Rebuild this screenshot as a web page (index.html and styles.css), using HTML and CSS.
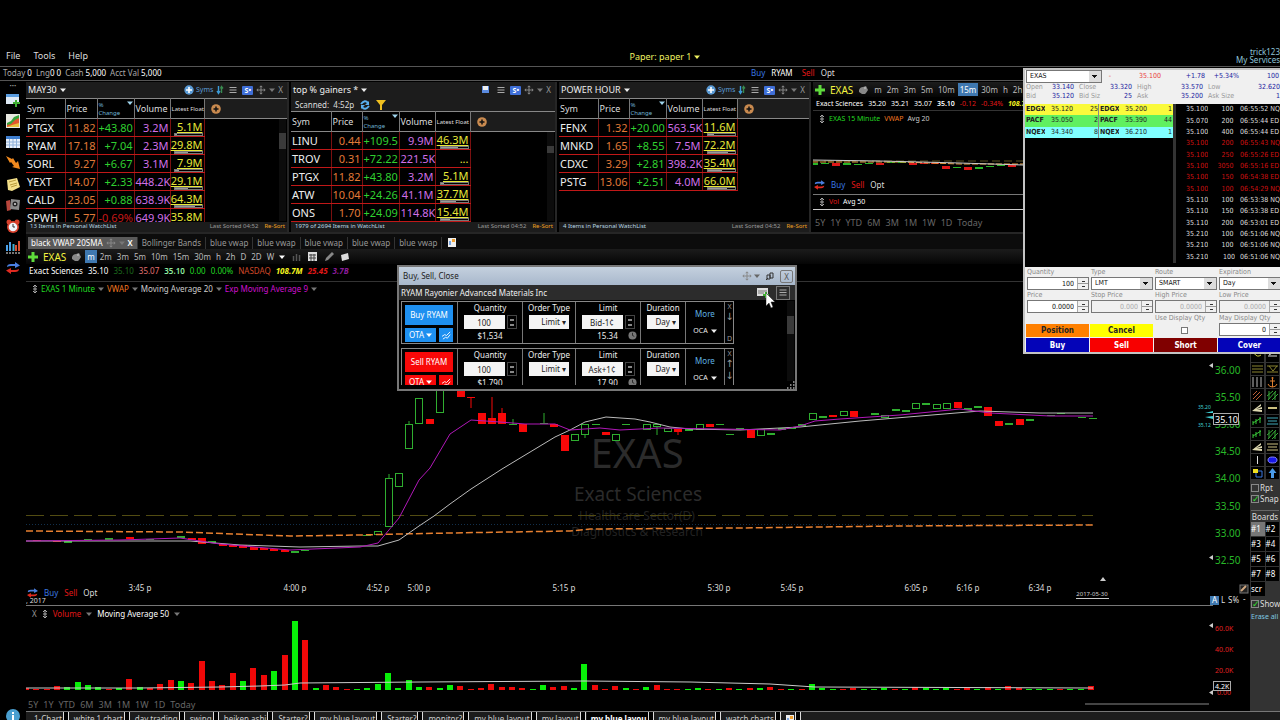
FILE: index.html
```html
<!DOCTYPE html>
<html lang="en">
<head>
<meta charset="utf-8">
<title>Trading workspace</title>
<link rel="stylesheet" href="styles.css">
</head>
<body>
<svg class="defs" aria-hidden="true">
  <symbol id="i-plus" viewBox="0 0 10 10"><path d="M3.500 0h3v3.500H10v3H6.500V10h-3V6.500H0v-3h3.500z" fill="#5fdc3c"/></symbol>
  <symbol id="i-add" viewBox="0 0 10 10"><circle cx="5" cy="5" r="4.700" fill="#5b9bd5"/><path d="M5 2v6M2 5h6" stroke="#fff" stroke-width="1.600"/></symbol>
  <symbol id="i-addcol" viewBox="0 0 10 10"><circle cx="5" cy="5" r="4.800" fill="#c98a4f"/><path d="M5 2.500v5M2.500 5h5" stroke="#111" stroke-width="1.500"/></symbol>
  <symbol id="i-sort" viewBox="0 0 8 10"><path d="M2.500 1v7M1 6l1.500 2.500L4 6" stroke="#3c9bd8" fill="none" stroke-width="1.400"/><path d="M5.500 8V2M4.500 3.500L5.500 1.500 7 3.500" stroke="#3a8c50" fill="none" stroke-width="1.400"/></symbol>
  <symbol id="i-menu" viewBox="0 0 8 8"><path d="M0.500 1.500h7M0.500 4h7M0.500 6.500h7" stroke="#aaa"/></symbol>
  <symbol id="i-move" viewBox="0 0 10 10"><path d="M5 1v8M1 5h8M3.700 2.200L5 .8l1.300 1.400M3.700 7.800L5 9.200l1.300-1.400M2.200 3.700L.8 5l1.400 1.300M7.800 3.700L9.200 5 7.800 6.300" stroke="#888" fill="none"/></symbol>
  <symbol id="i-down" viewBox="0 0 6 4"><path d="M0 .5h6L3 4z" fill="currentColor"/></symbol>
  <symbol id="i-swap" viewBox="0 0 14 12"><path d="M1 5q0-3 4-3h4V0l5 3.500L9 6V4H5Q3 4 1 5z" fill="#4a7fe0"/><path d="M13 7q0 3-4 3H5v2L0 8.500 5 6v2h4q2 0 4-1z" fill="#e02a20"/></symbol>
  <symbol id="i-pig" viewBox="0 0 10 10"><path d="M1 5q1-3 4-3l3-1 1 2 1 2-2 3-1 1H4L1 7z" fill="#888"/><path d="M6 3h2" stroke="#ccc"/></symbol>
  <symbol id="i-updown" viewBox="0 0 6 10"><path d="M3 1v8M1 3l2-2 2 2M1 7l2 2 2-2M1 5h4" stroke="#aaa" fill="none"/></symbol>
  <symbol id="i-clock" viewBox="0 0 10 10"><circle cx="5" cy="5" r="4.500" fill="#777"/><path d="M5 2v3l2 1" stroke="#222" fill="none"/></symbol>
  <symbol id="i-zig" viewBox="0 0 10 10"><path d="M0 6l3-2 2 1 4-4M1 9l3-2 2 1 3-4" stroke="#fff" fill="none"/></symbol>
  <symbol id="i-page" viewBox="0 0 8 10"><path d="M0 1h8v9H0z" fill="#eee"/><path d="M4 2h3v3H4z" fill="#f0a030"/><path d="M1 4h2v4H1z" fill="#7aa5e0"/></symbol>
</svg>

<div class="app">
  <header class="menubar">
    <nav class="menus"><button>File</button><button>Tools</button><button>Help</button></nav>
    <button class="account">Paper: paper 1 <svg class="caret"><use href="#i-down"/></svg></button>
    <div class="user"><a href="#">trick123</a><a href="#">My Services</a></div>
  </header>
  <div class="balances">
    <p class="bal"><span>Today <b>0</b></span><span>Lng<b>0</b> <b>0</b></span><span>Cash <b>5,000</b></span><span>Acct Val <b>5,000</b></span></p>
    <p class="quick"><a class="blue" href="#">Buy</a><b>RYAM</b><a class="red" href="#">Sell</a><a href="#">Opt</a></p>
  </div>

  <div class="body">
    <aside class="rail">
      <span class="dots">•••</span>
      <svg viewBox="0 0 14 14"><path d="M0 1h13v10H0z" fill="#dfeaf5"/><path d="M0 1h13v3H0z" fill="#5a9de0"/><path d="M9 7h2v2h3v2h-3v3H9v-3H7V9h2z" fill="#3fae32"/></svg>
      <svg viewBox="0 0 14 14"><path d="M0 0h14v14H0z" fill="#e8e8e0"/><path d="M1 13V9l4-2 3-4 5-2v12z" fill="#37a23a"/><path d="M1 13v-2l4-1 4-4 4-2v9z" fill="#e2552d"/><path d="M1 13l5-2 7-2v4z" fill="#e9c23b"/></svg>
      <svg viewBox="0 0 14 14"><path d="M0 1h14v12H0z" fill="#e8f0fa"/><path d="M0 1h14v3H0z" fill="#3f7fd0"/><path d="M0 7h14M0 10h14M3.500 4v9M7 4v9M10.500 4v9" stroke="#8fb0d8"/></svg>
      <svg viewBox="0 0 14 14"><path d="M0 0l6 3 1-1 3 5 2-2 2 8-8-2 2-1-3-4-1 1z" fill="#f28a1f"/></svg>
      <svg viewBox="0 0 14 14"><path d="M1 3l10-2 3 9-8 4-4-1z" fill="#f4e08a"/><path d="M3 5l7-2M4 8l7-2M5 10l6-2" stroke="#b89a3a"/></svg>
      <svg viewBox="0 0 14 14"><path d="M0 3l4-1 1 10-4 1z" fill="#b8463c"/><path d="M5 1l9 1-1 10-9-1z" fill="#8a8a8a"/><circle cx="9" cy="6" r="2.500" fill="#222"/><circle cx="9" cy="6" r="1" fill="#ddd"/></svg>
      <svg viewBox="0 0 14 14"><circle cx="3" cy="3" r="2.500" fill="#d8402c"/><circle cx="11" cy="3" r="2.500" fill="#d8402c"/><circle cx="7" cy="8" r="6" fill="#d8402c"/><circle cx="7" cy="8" r="4.300" fill="#eef4fa"/><path d="M7 5v3h2" stroke="#333" fill="none"/></svg>
      <svg viewBox="0 0 14 14"><path d="M1 5v6M4 2v9" stroke="#4aa0e8" stroke-width="2"/><path d="M7.500 4v7" stroke="#3fb0d0" stroke-width="2"/><path d="M10 5v6M13 1v10" stroke="#d85030" stroke-width="2"/><path d="M0 13h14" stroke="#eee" stroke-dasharray="2 1"/></svg>
      <svg viewBox="0 0 14 12"><use href="#i-swap"/></svg>
      <svg class="info" viewBox="0 0 14 14"><circle cx="7" cy="7" r="7" fill="#4a9fd0"/><path d="M7 6v5M7 3v2" stroke="#fff" stroke-width="2"/></svg>
    </aside>

    <main class="desk">
      <section class="lists">
        <div class="list" data-list="may30"></div>
        <div class="list" data-list="gainers"></div>
        <div class="list" data-list="power"></div>
        <div class="mini">
          <div class="toolbar">
            <svg class="ic10"><use href="#i-plus"/></svg><b class="sym">EXAS</b><svg class="ic10"><use href="#i-pig"/></svg>
            <button>m</button><button>2m</button><button>3m</button><button>5m</button><button>10m</button><button class="on">15m</button><button>30m</button><button>h</button><button>2h</button>
          </div>
          <p class="quote small"><span>Exact Sciences</span><span>35.20</span><span>35.21</span><span>35.07</span><b>35.10</b><span class="red">-0.12</span><span class="red">-0.34%</span><b class="yellow it">108.7M</b></p>
          <p class="legend small"><svg class="ud"><use href="#i-updown"/></svg><span class="green">EXAS 15 Minute</span><span class="orange">VWAP</span><span>Avg 20</span></p>
          <svg class="minichart" viewBox="813 126 211 51" preserveAspectRatio="xMinYMin meet" id="mini"></svg>
          <p class="trade"><svg class="swap"><use href="#i-swap"/></svg><a class="blue" href="#">Buy</a><a class="red" href="#">Sell</a><a href="#">Opt</a></p>
          <p class="legend small vol"><svg class="ud"><use href="#i-updown"/></svg><span class="red">Vol</span><span>Avg 50</span></p>
          <p class="range"><button>5Y</button><button>1Y</button><button>YTD</button><button>6M</button><button>3M</button><button>1M</button><button>1W</button><button>1D</button><button>Today</button></p>
        </div>
      </section>

      <nav class="tabs">
        <button class="tab on">black VWAP 20SMA <svg class="ic10"><use href="#i-move"/></svg><svg class="caret dim"><use href="#i-down"/></svg><b>X</b></button>
        <button class="tab">Bollinger Bands</button><button class="tab">blue vwap</button><button class="tab">blue vwap</button><button class="tab">blue vwap</button><button class="tab">blue vwap</button><button class="tab">blue vwap</button>
        <svg class="page"><use href="#i-page"/></svg>
      </nav>

      <div class="work">
        <section class="chartcol">
          <div class="toolbar">
            <svg class="ic10"><use href="#i-plus"/></svg><b class="sym">EXAS</b><svg class="ic10"><use href="#i-pig"/></svg>
            <button class="on">m</button><button>2m</button><button>3m</button><button>5m</button><button>10m</button><button>15m</button><button>30m</button><button>h</button><button>2h</button><button>D</button><button>2D</button><button>W</button>
            <svg class="caret white"><use href="#i-down"/></svg>
            <svg class="ic10" viewBox="0 0 10 10"><path d="M1.500 4v5M4.500 2v7M7.500 3v6" stroke="#555" stroke-width="1.500"/></svg>
            <svg class="ic10" viewBox="0 0 10 10"><path d="M0 0h9v9H0z" fill="#ddd"/><path d="M1 3h7M1 6h7M3 2v7M6 2v7" stroke="#444"/></svg>
            <svg class="ic10" viewBox="0 0 10 10"><path d="M1 9l1-3 6-6 2 2-6 6z" fill="#888"/></svg>
            <svg class="ic10" viewBox="0 0 10 10"><path d="M1 3l7-2 1 6-7 2z" fill="#ddd"/></svg>
          </div>
          <p class="quote"><span>Exact Sciences</span><span>35.10</span><span class="dkgreen">35.10</span><span class="salmon">35.07</span><b class="ltgreen">35.10</b><span class="green">0.00</span><span class="green">0.00%</span><span class="rust">NASDAQ</span><b class="yellow it">108.7M</b><b class="red it">25.45</b><b class="purple it">3.7B</b></p>
          <p class="legend main"><svg class="ud"><use href="#i-updown"/></svg><span class="green">EXAS 1 Minute</span><svg class="caret dim"><use href="#i-down"/></svg><span class="orange">VWAP</span><svg class="caret dim"><use href="#i-down"/></svg><span>Moving Average 20</span><svg class="caret dim"><use href="#i-down"/></svg><span class="magenta">Exp Moving Average 9</span><svg class="caret dim"><use href="#i-down"/></svg></p>
          <div class="pane">
            <svg class="plot" id="price" viewBox="26 296 1224 309" preserveAspectRatio="xMinYMin meet"></svg>
            <p class="trade over"><svg class="swap"><use href="#i-swap"/></svg><a class="blue" href="#">Buy</a><a class="red" href="#">Sell</a><a href="#">Opt</a></p>
          </div>
          <div class="pane">
            <svg class="plot" id="volume" viewBox="26 605 1224 93" preserveAspectRatio="xMinYMin meet"></svg>
            <p class="legend over"><button>X</button><svg class="ud"><use href="#i-updown"/></svg><span class="red">Volume</span><svg class="caret dim"><use href="#i-down"/></svg><span class="white">Moving Average 50</span><svg class="caret dim"><use href="#i-down"/></svg></p>
          </div>
          <p class="range"><button>5Y</button><button>1Y</button><button>YTD</button><button>6M</button><button>3M</button><button>1M</button><button>1W</button><button>1D</button><button>Today</button><i class="hscroll"></i></p>
        </section>
        <aside class="tools">
          <div class="toolgrid" id="toolgrid"></div>
          <label><input type="checkbox">Rpt</label>
          <label><input type="checkbox" checked>Snap</label>
          <h2>Boards</h2>
          <div class="boards"><button class="on">#1</button><button>#2</button><button>#3</button><button>#4</button><button>#5</button><button>#6</button><button>#7</button><button>#8</button><button>scr</button></div>
          <label><input type="checkbox" checked>Show</label>
          <a href="#" class="erase">Erase all</a>
        </aside>
      </div>
      <nav class="layouts"><button>1-Chart</button><button>white 1 chart</button><button>day trading</button><button>swing</button><button>heiken ashi</button><button>Starter?</button><button>my blue layout</button><button>Starter?</button><button>monitor?</button><button>my blue layout</button><button>my layout</button><button class="on">my blue layou</button><button>my blue layout</button><button>watch charts</button><button aria-label="New layout"><svg class="page"><use href="#i-page"/></svg></button></nav>
    </main>
  </div>
</div>

<section class="dialog">
  <header><h1>Buy, Sell, Close</h1><svg class="ic10"><use href="#i-move"/></svg><svg class="caret"><use href="#i-down"/></svg><svg class="ic10 pin" viewBox="0 0 10 10"><path d="M2 4h3v4H2zM5 2h3v5H5z" fill="none" stroke="#333"/><path d="M1 9l2-2" stroke="#333"/></svg><button>X</button></header>
  <div class="sub"><span>RYAM Rayonier Advanced Materials Inc</span><svg class="card" viewBox="0 0 12 10"><path d="M0 0h11v8H0z" fill="#ddd"/><path d="M1 3h9M1 5h6" stroke="#777"/><path d="M9 4v6M6 7h6" stroke="#3fae32" stroke-width="2"/></svg><button aria-label="Menu"><svg viewBox="0 0 8 8"><use href="#i-menu"/></svg></button></div>
  <div class="orders">
    <div class="order buy">
      <div class="act"><button class="big">Buy RYAM</button><button>OTA <svg class="caret"><use href="#i-down"/></svg></button><button aria-label="Chart order"><svg viewBox="0 0 10 10"><use href="#i-zig"/></svg></button></div>
      <div><label for="bq">Quantity</label><span class="spin"><input id="bq" value="100"><i></i></span><small>$1,534</small></div>
      <div><label for="bt">Order Type</label><select id="bt"><option>Limit ▾</option></select></div>
      <div><label for="bl">Limit</label><span class="spin"><input id="bl" value="Bid-1¢"><i></i></span><small>15.34 <svg class="clk"><use href="#i-clock"/></svg></small></div>
      <div><label for="bd">Duration</label><select id="bd"><option>Day ▾</option></select></div>
      <div class="more"><a href="#">More</a><button>OCA <svg class="caret"><use href="#i-down"/></svg></button></div>
      <div class="side"><span>X</span><span class="ar">↓</span><span class="end">D</span></div>
    </div>
    <div class="order sell">
      <div class="act"><button class="big">Sell RYAM</button><button>OTA <svg class="caret"><use href="#i-down"/></svg></button><button aria-label="Chart order"><svg viewBox="0 0 10 10"><use href="#i-zig"/></svg></button></div>
      <div><label for="sq">Quantity</label><span class="spin"><input id="sq" value="100"><i></i></span><small>$1,790</small></div>
      <div><label for="st">Order Type</label><select id="st"><option>Limit ▾</option></select></div>
      <div><label for="sl">Limit</label><span class="spin"><input id="sl" value="Ask+1¢"><i></i></span><small>17.90 <svg class="clk"><use href="#i-clock"/></svg></small></div>
      <div><label for="sd">Duration</label><select id="sd"><option>Day ▾</option></select></div>
      <div class="more"><a href="#">More</a><button>OCA <svg class="caret"><use href="#i-down"/></svg></button></div>
      <div class="side"><span>X</span><span class="ar">↑</span><span class="ar">↓</span></div>
    </div>
  </div>
  <div class="dscroll"></div>
  <svg class="grip" viewBox="0 0 8 8"><path d="M6 1h1.500M6 4h1.500M3 4h1.500M6 7h1.500M3 7h1.500M0 7h1.500" stroke="#aaa" stroke-width="1.500"/></svg>
  <svg class="cursor" viewBox="0 0 10 16"><path d="M0 0v13l3-3 2 5 2-1-2-5h4z" fill="#fff" stroke="#222" stroke-width=".5"/></svg>
</section>

<section class="level2">
  <div class="top">
    <select aria-label="Symbol"><option>EXAS</option></select>
    <div class="last"><span class="tick">-</span><span class="lred">35.100</span><span>+1.78</span><span>+5.34%</span><span>100</span></div>
    <dl class="stats"><dt>Open</dt><dd>33.140</dd><dt>Close</dt><dd>33.320</dd><dt>High</dt><dd>33.570</dd><dt>Low</dt><dd>32.620</dd><dt>Bid</dt><dd>35.120</dd><dt>Bid Siz</dt><dd>25</dd><dt>Ask</dt><dd>35.200</dd><dt>Ask Size</dt><dd>1</dd></dl>
  </div>
  <div class="book">
    <table class="depth"><tr class="y"><th>EDGX</th><td>35.120</td><td>25</td></tr><tr class="g"><th>PACF</th><td>35.050</td><td>2</td></tr><tr class="c"><th>NQEX</th><td>34.340</td><td>8</td></tr></table>
    <table class="depth"><tr class="y"><th>EDGX</th><td>35.200</td><td>1</td></tr><tr class="g"><th>PACF</th><td>35.390</td><td>44</td></tr><tr class="c"><th>NQEX</th><td>36.210</td><td>1</td></tr></table>
    <table class="tape"><tbody id="tape"></tbody></table>
  </div>
  <form class="entry">
    <label>Quantity<span class="num"><input value="100"><i></i></span></label>
    <label>Type<span class="combo"><select><option>LMT</option></select></span></label>
    <label>Route<span class="combo"><select><option>SMART</option></select></span></label>
    <label>Expiration<span class="combo"><select><option>Day</option></select></span></label>
    <label>Price<span class="num"><input value="0.0000"><i></i></span></label>
    <label class="off">Stop Price<span class="num"><input value="0.000" disabled><i></i></span></label>
    <label class="off">High Price<span class="num"><input value="0.0000" disabled><i></i></span></label>
    <label class="off">Low Price<span class="num"><input value="0.0000" disabled><i></i></span></label>
    <button type="button" class="pos">Position</button>
    <button type="button" class="can">Cancel</button>
    <label class="chk">Use Display Qty<input type="checkbox"></label>
    <label>May Display Qty<span class="num"><input value="0"><i></i></span></label>
    <button type="button" class="b">Buy</button><button type="button" class="s">Sell</button><button type="button" class="sh">Short</button><button type="button" class="b">Cover</button>
  </form>
</section>
<script src="app.js"></script>
</body>
</html>
```
FILE: styles.css
```css
* { box-sizing: border-box; margin: 0; padding: 0; }
body { background: #000; color: #ddd; font: 8px/12px "Noto Sans", "Open Sans", sans-serif; overflow: hidden; position: relative; height: 100vh; }
button, input, select { font: inherit; color: inherit; background: none; border: 0; border-radius: 0; }
select, input { appearance: none; }
a { color: inherit; text-decoration: none; }
b { font-weight: 600; }
svg { display: block; flex: none; }
table { border-collapse: collapse; }
.defs { position: absolute; width: 0; height: 0; }
.blue { color: #3a78e0; } .red { color: #e01818; } .green { color: #22d822; } .orange { color: #f07820; }
.yellow { color: #f8f820; } .dkgreen { color: #1c6a1c; } .salmon { color: #e07070; } .ltgreen { color: #90f0a0; }
.rust { color: #d04828; } .purple { color: #8a1c9a; } .magenta { color: #d010d0; } .white { color: #fff; } .it { font-style: italic; font-weight: 700; }
.caret { width: 6px; height: 4px; } .dim { color: #777; }
.ic10 { width: 10px; height: 10px; }

.app { height: 100vh; display: flex; flex-direction: column; }
.menubar { display: grid; grid-template-columns: 1fr auto 1fr; height: 67px; padding-top: 48px; border-bottom: 1px solid #555; font-size: 9px; line-height: 16px; }
.menus { display: flex; gap: 13px; padding-left: 6px; align-items: flex-start; }
.account { display: flex; align-items: center; gap: 3px; color: #eef060; height: 17px; padding-left: 50px; }
.user { text-align: right; line-height: 8px; font-size: 8px; color: #8fc4d8; display: flex; flex-direction: column; }
.balances { display: flex; height: 14px; border-bottom: 1px solid #555; line-height: 12px; color: #aaa; }
.balances b { color: #fff; font-weight: 400; }
.bal { display: flex; gap: 4px; padding-left: 3px; width: 751px; }
.quick { display: flex; gap: 6px; color: #ddd; }
.quick b { margin-right: 3px; }

.body { flex: 1; display: flex; min-height: 0; }
.rail { width: 26px; display: flex; flex-direction: column; align-items: center; gap: 7px; }
.rail svg { width: 14px; height: 14px; }
.rail .dots { font-size: 6px; line-height: 6px; color: #999; padding-top: 2px; margin-bottom: -3px; }
.rail .info { margin-top: auto; margin-bottom: -3px; }
.desk { flex: 1; display: flex; flex-direction: column; min-width: 0; }

.lists { display: grid; grid-template-columns: 263px 266px 252px 1fr; column-gap: 2px; height: 153px; padding-top: 1px; border-bottom: 2px solid #262626; }
.list { position: relative; display: flex; flex-direction: column; overflow: hidden; border-right: 2px solid #262626; }
.list header { display: flex; align-items: center; gap: 3px; height: 16px; padding: 0 4px 0 2px; background: #1c1c1c; color: #999; }
.list header h2 { font-size: 9px; font-weight: 400; color: #eee; display: flex; align-items: center; gap: 3px; margin-right: auto; }
.list header .add { display: flex; align-items: center; gap: 2px; color: #5b9bd5; font-size: 7px; }
.list header .srt { width: 8px; height: 10px; }
.list header .mn { width: 8px; height: 8px; margin: 0 2px; }
.list header .s { background: #3f6fd8; color: #fff; width: 11px; height: 9px; line-height: 9px; font-size: 7px; font-weight: 700; text-align: center; border-radius: 1px; }
.scan { display: flex; align-items: center; gap: 6px; height: 13px; background: #1c1c1c; padding-left: 4px; color: #ddd; }
.grid { flex: 1; overflow: hidden; background: #000; }
.list table { table-layout: fixed; width: 100%; }
.list thead { background: #1c1c1c; }
.list thead tr { height: 20px; border-top: 1px solid #888; border-bottom: 1px solid #888; }
.list thead th { font-weight: 400; font-size: 9px; text-align: left; background: #000; border-right: 1px solid #777; padding-left: 1px; white-space: nowrap; color: #ddd; }
.list thead th.chg { font-size: 6px; line-height: 8px; color: #6fb4d4; }
.list thead .pct { display: flex; justify-content: space-between; }
.list thead .pct svg { color: #9fd4ec; margin-right: 1px; }
.list thead th.flt { font-size: 6px; }
.list thead th.rest { background: #1c1c1c; border: 0; padding-left: 6px; }
.list tbody tr { height: 18px; }
.list tbody td { font-size: 11px; line-height: 14px; text-align: right; border-bottom: 1px solid #c01818; border-right: 1px solid #7a1010; padding: 0 1px; white-space: nowrap; }
.list tbody td:first-child { text-align: left; color: #eee; }
.list tbody td.rest { border: 0; }
.p { color: #e07a38; } .u { color: #30d030; } .d { color: #c81818; } .v { color: #d070e8; } .list tbody .f { color: #e8e838; }
.flo { display: flex; flex-direction: column; align-items: flex-end; line-height: 13px; }
.flo u { text-underline-offset: 1px; }
.meter { display: block; width: 29px; height: 3px; border: 1px solid #777; background: #000; }
.meter i { display: block; height: 1px; background: #999; }
.list footer { height: 10px; display: flex; gap: 6px; background: #1c1c1c; font-size: 6px; line-height: 9px; padding: 0 2px 0 4px; color: #999; }
.list footer span:first-child { margin-right: auto; color: #b8d8e4; }
.list footer a { color: #f0a020; }
.sb { position: absolute; right: 1px; bottom: 11px; top: 37px; width: 7px; background: #0c0c0c; padding-top: 14px; }
.sb i { display: block; height: 16px; background: #3a3a3a; }
.scan ~ .sb { top: 50px; }
.scan ~ .sb i { height: 7px; }

.mini { overflow: hidden; display: flex; flex-direction: column; }
.toolbar { display: flex; align-items: center; gap: 1px; height: 15px; padding: 0 2px; background: linear-gradient(#1c1c1c, #050505); color: #bbb; }
.toolbar .sym { color: #f4f440; font-size: 10px; font-weight: 400; padding: 0 4px; }
.toolbar button { padding: 0 2px; height: 13px; line-height: 13px; }
.toolbar .sym + .ic10 { margin-right: 3px; }
.toolbar .on { background: #3f78b0; color: #fff; }
.toolbar .caret { margin: 0 6px 0 2px; }
.toolbar .ic10 + .ic10 { margin-left: 5px; }
.quote { display: flex; gap: 5px; padding-left: 3px; height: 18px; line-height: 14px; color: #fff; border-bottom: 1px solid #333; }
.quote span, .quote b { white-space: nowrap; }
.small { font-size: 7px; }
.quote.small { height: 14px; }
.legend { display: flex; align-items: center; gap: 4px; height: 15px; padding-left: 6px; color: #ccc; }
.legend.main { height: 14px; gap: 3px; }
.ud { width: 6px; height: 10px; }
.minichart { width: 211px; height: 51px; }
.trade { display: flex; gap: 6px; align-items: center; height: 12px; padding-left: 1px; }
.swap { width: 11px; height: 10px; }
.mini .trade { height: 15px; }
.mini .vol { border-top: 1px solid #777; border-bottom: 1px solid #ccc; margin-top: 2px; height: 16px; color: #fff; }
.range { display: flex; gap: 5px; font-size: 9px; color: #666; padding-left: 2px; line-height: 12px; height: 13px; }
.mini .range { margin-top: 6px; }
.hscroll { width: 124px; height: 2px; background: #444; margin: 5px 41px 0 auto; }

.tabs { display: flex; align-items: flex-end; height: 15px; background: #0c0c0c; color: #999; padding-left: 2px; }
.tab { height: 12px; line-height: 12px; padding: 0 4px; border-right: 1px solid #333; }
.tab.on { display: flex; align-items: center; gap: 3px; background: #5a5a5a; color: #fff; padding: 0 4px 0 3px; }
.page { width: 8px; height: 10px; margin-left: 6px; align-self: center; }
.work { flex: 1; display: flex; min-height: 0; overflow: hidden; border-bottom: 1px solid #777; }
.chartcol { flex: 1; min-width: 0; display: flex; flex-direction: column; }
.pane { position: relative; }
.plot { width: 100%; height: auto; }
.over { position: absolute; left: 0; }
.trade.over { bottom: 6px; }
.legend.over { top: 1px; gap: 5px; color: #999; }
.tools { width: 30px; background: #333; padding: 101px 1px 0; display: flex; flex-direction: column; }
.toolgrid { display: grid; grid-template-columns: 1fr 1fr; gap: 1px; margin-bottom: 3px; }
.toolgrid svg { width: 13px; height: 12px; background: #000; }
.tools label { display: flex; align-items: center; gap: 1px; height: 11px; color: #ddd; white-space: nowrap; }
.tools input { width: 8px; height: 8px; border: 1px solid #888; }
.tools input:checked::before { content: "✓"; display: block; font: 700 9px/7px "DejaVu Sans", sans-serif; color: #30e030; }
.tools h2 { font-size: 8px; font-weight: 400; line-height: 11px; margin-top: 6px; border-top: 1px solid #666; text-align: center; }
.boards { display: grid; grid-template-columns: 1fr 1fr; gap: 1px; margin-bottom: 2px; }
.boards button { background: #000; color: #fff; height: 14px; text-align: left; }
.boards .on { background: #777; }
.erase { color: #7fc8e0; font-size: 7px; white-space: nowrap; line-height: 15px; }
.layouts { height: 8px; display: flex; gap: 12px; overflow: hidden; background: #1c1c1c; color: #ccc; padding-left: 8px; }
.layouts button { position: relative; height: 14px; line-height: 14px; white-space: nowrap; }
.layouts button::after { content: ""; position: absolute; right: -7px; top: 0; width: 4px; height: 14px; border-left: 1px solid #ddd; border-right: 1px solid #ddd; background: #000; }
.layouts .on { background: #000; color: #fff; font-weight: 700; box-shadow: 0 0 0 4px #000; }
.layouts .page { margin: 0; }

.dialog { position: absolute; left: 397px; top: 265px; width: 400px; height: 126px; border: 2px solid #777; background: #000; overflow: hidden; color: #eee; }
.dialog header { display: flex; align-items: center; gap: 5px; height: 18px; background: linear-gradient(#c4d0de, #a8b8cc); color: #222; padding: 0 2px 0 4px; }
.dialog h1 { font-size: 8px; font-weight: 400; margin-right: auto; }
.dialog header .ic10:not(.pin) { margin-right: -3px; }
.dialog header .caret { color: #666; }
.dialog header button { width: 13px; height: 13px; line-height: 11px; border: 1px solid #777; border-radius: 2px; color: #555; }
.dialog .sub { display: flex; align-items: center; gap: 7px; height: 15px; background: #2c2c2c; padding: 0 5px 0 2px; }
.sub span { margin-right: auto; }
.card { width: 12px; height: 10px; }
.sub button { border: 1px solid #777; padding: 1px 2px; height: 14px; width: 14px; }
.sub button svg { width: 8px; height: 9px; }
.orders { height: 85px; overflow: hidden; padding: 1px 0 0 2px; }
.order { display: grid; grid-template-columns: 56px 65px 53px 65px 45px 39px 9px; height: 43px; border: 1px solid #888; margin-bottom: 4px; width: 333px; }
.order > div { border-right: 1px solid #777; display: flex; flex-direction: column; align-items: center; }
.order > div:last-child { border: 0; }
.order label { line-height: 11px; height: 13px; }
.order .act { display: grid; grid-template-columns: 1fr 14px; gap: 3px; padding: 3px 4px 0 3px; grid-template-rows: 20px 14px; align-items: stretch; align-content: start; }
.order .act button { background: #1e90f0; color: #fff; display: flex; align-items: center; justify-content: center; gap: 2px; }
.order .act button.big { grid-column: span 2; }
.order.sell .act button { background: #f80808; }
.act button svg:not(.caret) { width: 9px; height: 9px; }
.spin { display: flex; gap: 2px; }
.spin input { width: 41px; height: 14px; background: #f4f4f4; color: #222; text-align: center; }
.spin i { width: 10px; height: 14px; border: 1px solid #444; background: linear-gradient(#888, #888) center 3px / 4px 2px no-repeat, linear-gradient(#888, #888) center 8px / 4px 2px no-repeat; }
.order small { font-size: 8px; line-height: 13px; display: flex; align-items: center; gap: 10px; }
.order > div:nth-child(4) small { padding-left: 18px; }
.clk { width: 9px; height: 9px; }
.order select { height: 14px; background: #f4f4f4; color: #222; padding: 0 3px; width: 40px; text-align: right; }
.order > div:nth-child(5) select { width: 32px; }
.order .more { justify-content: space-evenly; }
.more a { color: #5fb0e0; }
.more button { display: flex; align-items: center; gap: 3px; font-size: 7px; }
.order .side { color: #999; font-size: 7px; line-height: 9px; }
.side .ar { font: 10px/12px "DejaVu Sans", sans-serif; }
.side .end { margin-top: auto; }
.dscroll { position: absolute; right: 1px; top: 34px; bottom: 8px; width: 7px; background: linear-gradient(#3a3a3a, #3a3a3a) 0 15px / 7px 18px no-repeat #0c0c0c; }
.grip { position: absolute; right: 0; bottom: 0; width: 8px; height: 8px; }
.cursor { position: absolute; left: 367px; top: 26px; width: 10px; height: 16px; }

.level2 { position: absolute; right: 0; top: 68px; width: 257px; height: 286px; border: 2px solid #c4c4c4; border-right: 0; background: #000; overflow: hidden; font: 7px/9px "DejaVu Sans Condensed", "Liberation Sans", sans-serif; color: #222; display: flex; flex-direction: column; }
.level2 .top { background: #f0f0f0; height: 34px; display: grid; grid-template-columns: 77px 1fr; align-content: start; }
.combo, .top { position: relative; }
.level2 select { border: 1px solid #777; height: 13px; padding-left: 3px; color: #111; background: linear-gradient(#111, #111) right 4px top 4px / 5px 1px no-repeat, linear-gradient(#111, #111) right 5px top 5px / 3px 1px no-repeat, linear-gradient(#111, #111) right 6px top 6px / 1px 1px no-repeat, linear-gradient(#ddd, #ddd) right 0 center / 12px 13px no-repeat #fff; }
.level2 .top select { height: 13px; margin-left: 1px; }
.last { display: grid; grid-template-columns: 16px 43px 44px 34px 1fr; color: #2020a0; line-height: 13px; text-align: right; }
.last .lred { color: #e84040; } .last .tick { color: #e84040; text-align: center; }
.last span:last-child { padding-right: 1px; }
.stats { grid-column: 1 / -1; display: grid; grid-template-columns: 22px 27px 28px 30px 31px 40px 29px 1fr; line-height: 9px; }
.stats dt { color: #999; white-space: nowrap; padding-left: 5px; }
.stats dt:nth-of-type(4n+1) { padding-left: 1px; }
.stats dd { color: #2020a0; text-align: right; white-space: nowrap; }
.book { display: flex; height: 163px; }
.depth { width: 74px; height: 34px; align-self: flex-start; table-layout: fixed; }
.depth th { width: 20px; overflow: hidden; white-space: nowrap; text-align: left; padding-left: 1px; }
.depth td { text-align: right; padding-right: 1px; color: #222; } .depth td:nth-child(2) { width: 29px; }
.y { background: #fafa3c; } .g { background: #60f060; } .c { background: #80ffff; }
.book .depth + .depth { box-shadow: -1px 0 #888; }
.depth-rule { width: 1px; }
.tape { flex: 1; height: 159px; border-left: 3px solid #333; color: #ddd; table-layout: fixed; align-self: flex-start; }
.tape td { text-align: right; white-space: nowrap; overflow: hidden; }
.tape td:nth-child(1) { width: 37px; } .tape td:nth-child(2) { width: 30px; } .tape td:nth-child(3) { text-align: left; padding-left: 5px; }
.tape .dn { color: #d01010; }
.entry { flex: 1; background: #f0f0f0; display: grid; grid-template-columns: repeat(4, 1fr); grid-template-rows: 23px 23px 24px 14px; column-gap: 1px; padding: 1px 0 0 1px; color: #888; }
.entry label { display: flex; flex-direction: column; white-space: nowrap; padding-left: 1px; }
.entry select { width: 62px; }
.num { display: flex; height: 13px; border: 1px solid #777; background: #fff; width: 62px; }
.num input { width: 49px; text-align: right; color: #111; padding-right: 3px; height: 11px; }
.num i { width: 11px; border-left: 1px solid #aaa; background: linear-gradient(#333, #333) center 3px / 3px 1px no-repeat, linear-gradient(#333, #333) center 8px / 3px 1px no-repeat, linear-gradient(#999, #999) center 5px / 11px 1px no-repeat #f0f0f0; }
.off .num { background: #f0f0f0; } .num input:disabled { color: #aaa; }
.entry button { font-weight: 700; color: #fff; font-size: 8px; }
.entry .pos { background: #ff8000; color: #222; margin: 10px 0 1px; } .entry .can { background: #ff0; color: #222; margin: 10px 0 1px; }
.entry .b { background: #0404b8; } .entry .s { background: #f80000; } .entry .sh { background: #800000; }
.chk input { width: 7px; height: 7px; border: 1px solid #777; background: #fff; margin: 4px auto 0 26px; }
```
FILE: app.js
```js
const lists = {
  may30: { title: 'MAY30', syms: true, cols: [39, 32, 37, 36, 34], foot: '13 Items in Personal WatchList', scroll: true,
    rows: [['PTGX','11.82','+43.80','3.2M','5.1M',10],['RYAM','17.18','+7.04','2.3M','29.8M',50],['SORL','9.27','+6.67','3.1M','7.9M',15],['YEXT','14.07','+2.33','448.2K','29.1M',50],['CALD','23.05','+0.88','638.9K','64.3M',75],['SPWH','5.77','-0.69%','649.9K','35.8M',60]] },
  gainers: { title: 'top % gainers *', scan: true, cols: [40, 31, 37, 36, 35], foot: '1979 of 2694 Items in WatchList', scroll: true,
    rows: [['LINU','0.44','+109.5','9.9M','46.3M',65],['TROV','0.31','+72.22','221.5K','...',0],['PTGX','11.82','+43.80','3.2M','5.1M',12],['ATW','10.04','+24.26','41.1M','37.7M',58],['ONS','1.70','+24.09','114.8K','15.4M',35]] },
  power: { title: 'POWER HOUR', syms: true, cols: [39, 31, 37, 36, 35], foot: '4 Items in Personal WatchList',
    rows: [['FENX','1.32','+20.00','563.5K','11.6M',25],['MNKD','1.65','+8.55','7.5M','72.2M',75],['CDXC','3.29','+2.81','398.2K','35.4M',55],['PSTG','13.06','+2.51','4.0M','66.0M',72]] }
};
const use = (id, cls) => `<svg class="${cls}"><use href="#${id}"/></svg>`;
document.querySelectorAll('.list').forEach(el => {
  const l = lists[el.dataset.list];
  el.innerHTML = `<header><h2>${l.title} ${use('i-down', 'caret')}</h2>` +
    (l.syms ? `<span class="add">${use('i-add', 'ic10')}Syms</span>${use('i-sort', 'srt')}` : '<svg class="mn" viewBox="0 0 8 8"><path d="M0 0h7v7H0z" fill="#5b8be0"/><path d="M1 0h5v4H1z" fill="#eee"/></svg>') +
    `${use('i-menu', 'mn')}<span class="s">S•</span>${use('i-move', 'ic10')}${use('i-down', 'caret dim')}<span>X</span></header>` +
    (l.scan ? '<p class="scan"><span>Scanned:&nbsp; 4:52p</span><svg class="ic10" viewBox="0 0 10 10"><path d="M1 4q4-5 7-1M9 6q-4 5-7 1" stroke="#5ab0f0" stroke-width="2" fill="none"/><path d="M9 1v4H5zM1 9V5h4z" fill="#5ab0f0"/></svg><svg class="ic10" viewBox="0 0 10 10"><path d="M0 0h10L6 5v5H4V5z" fill="#f0c020"/></svg></p>' : '') +
    `<div class="grid"><table><colgroup>${l.cols.map(c => `<col style="width:${c}px">`).join('')}<col></colgroup>` +
    `<thead><tr><th>Sym</th><th>Price</th><th class="chg"><span class="pct">%${use('i-down', 'caret')}</span>Change</th><th>Volume</th><th class="flt">Latest Float</th><th class="rest">${use('i-addcol', 'ic10')}</th></tr></thead><tbody>` +
    l.rows.map(r => `<tr><td>${r[0]}</td><td class="p">${r[1]}</td><td class="${r[2][0] === '-' ? 'd' : 'u'}">${r[2]}</td><td class="v">${r[3]}</td><td class="f"><span class="flo">${r[5] ? `<u>${r[4]}</u><span class="meter"><i style="width:${r[5]}%"></i></span>` : r[4]}</span></td><td class="rest"></td></tr>`).join('') +
    `</tbody></table></div><footer><span>${l.foot}</span><span>Last Sorted 04:52</span><a href="#">Re-Sort</a></footer>` + (l.scroll ? '<div class="sb"><i></i></div>' : '');
});

document.getElementById('tape').innerHTML = [
  ['35.100','100','06:55:52 NQ'],['35.070','200','06:55:44 ED'],['35.100','400','06:55:44 ED'],['35.100','200','06:55:43 NQ',1],['35.100','250','06:55:26 ED',1],['35.100','3050','06:55:16 ED',1],['35.100','150','06:54:38 ED',1],['35.100','100','06:54:29 NQ',1],['35.110','100','06:53:38 NQ'],['35.110','150','06:53:38 ED'],['35.110','200','06:53:01 ED'],['35.210','100','06:51:06 NQ'],['35.210','100','06:51:06 NQ'],['35.210','100','06:51:06 NQ']
].map(r => `<tr class="${r[3] ? 'dn' : ''}"><td>${r[0]}</td><td>${r[1]}</td><td>${r[2]}</td></tr>`).join('');

const line = (pts, color, extra = '') => `<polyline points="${pts}" fill="none" stroke="${color}" ${extra}/>`;
const label = (x, y, s, size, color, extra = '') => `<text x="${x}" y="${y}" font-size="${size}" fill="${color}" ${extra}>${s}</text>`;

/* candles: x, top, bottom, colour, wick top, wick bottom */
const candle = ([x, a, b, c, wt, wb]) => {
  const col = c === 'r' ? '#f80808' : '#2fae2f';
  const wick = wt ? `<path d="M${x} ${wt}V${a}M${x} ${b}V${wb || b}" stroke="${col}"/>` : '';
  if (b - a < 2) return wick + `<path d="M${x - 4} ${a + .5}h8" stroke="${col}"/>`;
  return wick + (c === 'r' ? `<rect x="${x - 4}" y="${a}" width="8" height="${b - a}" fill="${col}"/>` : `<rect x="${x - 3.5}" y="${a + .5}" width="7" height="${b - a - 1}" fill="#000" stroke="${col}"/>`);
};
const candles = [
  [37,540,541,'r'],[57,541,542,'r'],[68,541,543,'g'],[88,539,540,'g'],[109,538,540,'g'],[130,537,539,'r'],[150,539,540,'g'],[181,536,538,'g'],[192,538,540,'r'],[202,538,544,'r'],[212,541,543,'g'],[223,544,546,'r'],[233,545,547,'r'],[243,545,548,'r'],[254,547,550,'r'],[264,548,550,'r'],[274,549,551,'r'],[285,550,552,'r'],[295,551,553,'g'],[305,550,551,'g'],
  [367,535,536,'g'],[378,531,535,'g'],[389,478,527,'g',474],[399,473,487,'g'],[409,424,449,'g',421],[419,398,424,'g'],[430,419,424,'r'],[440,380,413,'g'],[461,391,397,'r'],[471,397,398,'r',397,408],[482,413,424,'r'],[492,418,424,'r',397],[502,413,424,'r',408],[513,424,425,'g',419],[523,424,432,'r'],[544,423,424,'g',413],[554,424,427,'r'],[565,435,451,'r'],[575,434,441,'g'],[585,424,435,'g',424,438],[596,424,425,'g'],[606,432,435,'r'],[616,434,441,'g'],[626,424,425,'g'],[647,424,430,'g'],[657,424,427,'g',424,435],[668,428,432,'g'],[678,429,432,'r',429,435],[689,429,431,'g'],[700,424,430,'g'],[710,424,427,'r'],[720,424,425,'g'],[730,434,435,'g'],[740,428,430,'g'],[751,429,438,'r'],[761,429,436,'g'],[771,433,435,'g'],[782,428,430,'g'],[792,427,429,'g'],[802,424,426,'g'],[813,413,420,'g'],[823,416,418,'g'],[833,415,417,'r'],[844,411,416,'g'],[854,411,417,'r'],[875,413,415,'g'],[885,415,418,'g'],[896,409,411,'g'],[906,410,412,'g'],[916,403,409,'g'],[926,403,405,'g'],[937,404,409,'g'],[947,403,409,'g'],[958,402,408,'r'],[968,408,410,'g'],[978,406,408,'g'],[988,407,416,'r'],[999,421,426,'r'],[1009,423,425,'g'],[1020,419,425,'r'],[1030,419,421,'g'],[1051,415,416,'g'],[1061,413,414,'g'],[1082,417,418,'g'],[1093,418,419,'g']
];
const mark = 'text-anchor="middle" opacity=".9"';
document.getElementById('price').innerHTML =
  label(637, 468, 'EXAS', 40, '#303030', mark) + label(638, 501, 'Exact Sciences', 19, '#303030', mark) +
  label(637, 520, 'Healthcare Sector(D)', 12, '#262626', mark) + label(637, 536, 'Diagnostics &amp; Research', 12, '#262626', mark) +
  line('26,515.5 1093,515.5', '#524c12', 'stroke-dasharray="18 6"') + line('26,524.5 1093,524.5', '#12304c', 'stroke-dasharray="1 2"') +
  candles.map(candle).join('') +
  line('26,531 180,532 290,536 360,535 399,534 450,533 570,531 590,529 740,528 900,526 1093,525', '#e88030', 'stroke-dasharray="7 3" stroke-width="1.5"') +
  line('26,541 190,541 240,545 300,547 360,546 378,546 399,540 419,526 434,516 450,504 471,489 502,469 555,437 570,430 585,422 606,417 635,419 650,422 670,427 690,429 740,430 800,427 860,421 920,416 980,411 1040,413 1093,413', '#bbb') +
  line('26,541 120,540 180,538 220,544 290,550 360,547 378,543 399,518 419,480 430,468 450,434 471,420 500,422 525,424 555,424 570,430 600,428 620,430 660,428 720,429 780,430 800,426 815,421 840,419 900,415 960,409 990,413 1050,416 1093,416', '#b018b8') +
  ['36.00','35.50','35.00','34.50','34.00','33.50','33.00','32.50'].map((t, i) => label(1215, Math.round(374 + i * 27.1), t, 10, '#28b828')).join('') +
  [['3:45 p',140],['4:00 p',295],['4:52 p',378],['5:00 p',419],['5:15 p',564],['5:30 p',719],['5:45 p',792],['6:05 p',916],['6:16 p',968],['6:34 p',1040]].map(t => label(t[1], 591, t[0], 8, '#ddd', 'text-anchor="middle"')).join('') +
  '<path d="M1213 363l-4 2.500 4 2.500zM1213 555l-4 2.500 4 2.500zM1103 577l-3 4h6z" fill="#ccc"/>' +
  label(1092, 596, '2017-05-30', 6, '#ccc', 'text-anchor="middle"') + '<path d="M1076 598.500h33" stroke="#ccc"/>' +
  label(1198, 409, '35.20', 5, '#40d0d8') + label(1198, 427, '35.12', 5, '#40d0d8') +
  '<path d="M1205 413l8-2v2zM1205 417l8 2v-3z" fill="#40d0d8"/><rect x="1213.500" y="413.500" width="25" height="11" fill="#000" stroke="#aaa"/>' + label(1215, 423, '35.10', 9, '#fff') +
  label(26, 603, ', 2017', 7, '#ddd') +
  '<rect x="1240" y="585" width="8" height="8" fill="#222" stroke="#777"/><path d="M1241 591l5-5" stroke="#d0a880" stroke-width="2"/><rect x="1210" y="596" width="9" height="9" fill="#3f78b0"/>' +
  label(1212, 603, 'A', 8, '#fff') + label(1221, 603, 'L', 8, '#ddd') + label(1228, 603, 'S%', 8, '#ddd') + label(1243, 602, '-', 8, '#ddd');

/* volume: one entry per minute, height followed by direction */
const vols = '2r 1r 1r 4r 3g 8g 5g 3g 1r 2g 11r 3g 2r 6r 10r 9g 7r 29r 9r 5r 17r 9g 22r 15r 19g 35r 69g 50r 2g 5r 3r 1r 1g 2g 6g 17g 2g 10g 3g 3r 2g 5g 4r 1r 2r 6r 3r 3r 2r 1g 5g 3r 4r 2g 26g 5r 1r 4r 2g 1r 3g 5r 1r 1r 1g 2g 1r 1g 2r 1g 2r 2g 3r 1r 1g 1r 6g 2g 1g 1r 2r 1g 1g 2g 1r 1g 3r 2g 1g 2g 1r 2r 1g 3r 1g 4r 2r 1g 1g 1g 1r 1g 1g 4r'.split(' ');
document.getElementById('volume').innerHTML = '<path d="M26 605.500h1187" stroke="#777"/>' +
  vols.map((v, i) => { const h = parseInt(v, 10); return `<rect x="${Math.round(23 + i * 10.34)}" y="${690 - h}" width="6" height="${h}" fill="${v.endsWith('r') ? '#f00808' : '#08f008'}"/>`; }).join('') +
  line('26,688 140,688 220,687 260,686 285,685 300,683 420,682 585,681 690,682 770,684 815,687 1093,688', '#ccc') +
  label(1215, 631, '60.0K', 7, '#e02020') + label(1215, 652, '40.0K', 7, '#e02020') + label(1215, 673, '20.0K', 7, '#e02020') + label(1217, 695, '0.00', 7, '#e02020') +
  '<rect x="1213.500" y="681.500" width="17" height="9" fill="#000" stroke="#aaa"/>' + label(1215, 689, '4.2K', 7, '#fff') +
  '<path d="M1213 623l-4 2.500 4 2.500zM1213 690l-4 2.500 4 2.500z" fill="#ccc"/>';

document.getElementById('mini').innerHTML = line('812,161 1023,161', '#5a5020', 'stroke-dasharray="8 4"') +
  [163,163,163,163,164,163,163,162,162,163,163,163,166,167,167,167,166,165,165].map((y, i) => `<rect x="${810 + i * 11}" y="${y}" width="8" height="${[2,12,14].includes(i) ? 3 : i % 3 === 0 ? 2 : 1}" fill="${[2,6,9,10,11,12,14,18].includes(i) ? '#e01818' : '#28b828'}"/>`).join('') +
  line('812,162 900,162 960,164 1023,164', '#e8a040', 'stroke-dasharray="6 2"') + line('812,160 880,161 960,163 1023,165', '#ccc');

const L = (d, c) => `<path d="${d}" stroke="${c}" fill="none"/>`;
document.getElementById('toolgrid').innerHTML = [
  L('M3 3q3 5 7 2', '#cc4'), L('M2 6h9M3 5l5-3', '#ddd'),
  L('M1 3h11M1 6h11M1 9h11', '#8a8430'), L('M1 3h11M1 9h11M3 3l4 5 4-5', '#8a8430'),
  L('M2 1v10M6 1v10M10 1v10', '#bbb'), L('M6.500 3v8M4 5h5M2 8q1 3 4.500 3t4.500-3', '#e08030') + '<circle cx="6.500" cy="2" r="1" fill="#e08030"/>',
  L('M2 10l7-7M5 11l6-6M2 6l4-4', '#c06038'), L('M2 11l8-9M1 7l6-5M6 11l6-6M3 2v8M9 3v8', '#38a838'),
  '<path d="M1 9l9-7v2L5 7l6-2v2L6 8h5v2z" fill="#ddd8b0"/>', '<path d="M2 5h9v2H2z" fill="#ccc080"/>',
  L('M2 10V6M5 9V4M9 8V2M2 8l8-5', '#38c838'), L('M1 3h11M1 9h11M2 6h9', '#40a8b8'),
  L('M2 10V6M5 9V4M9 8V2M2 8l8-5', '#38c838'), L('M2 11l8-9M1 7l6-5M6 11l6-6M3 2v8M9 3v8', '#38a838'),
  '<path d="M1 9l9-7v2L5 7l6-2v2L6 8h5v2z" fill="#ddd8b0"/>', L('M1 3h11M1 9h11M2 6h9', '#ccc080'),
  L('M6.500 2v8', '#ddd'), '<ellipse cx="6.500" cy="6" rx="4.500" ry="3" fill="#1818e8" stroke="#88f"/>',
  L('M5 4h6v6H5z', '#3a78e0') + '<rect x="2" y="2" width="5" height="4" fill="#f0e020"/>', '<path d="M6.500 1l4 5H8v5H5V6H2.500z" fill="#4a9ae8"/>'
].map(s => `<svg viewBox="0 0 13 12">${s}</svg>`).join('');
```
